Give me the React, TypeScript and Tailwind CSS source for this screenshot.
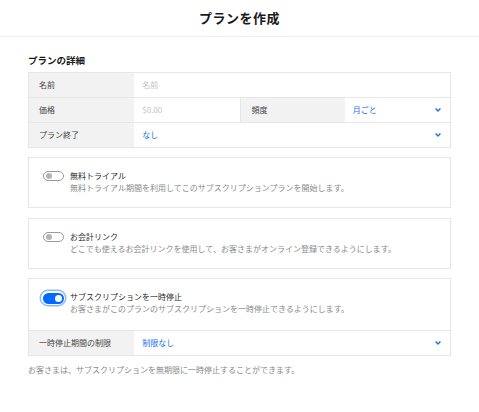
import React from "react";

const font = { fontFamily: '"Noto Sans CJK JP", "Noto Sans", sans-serif' };

function Chevron() {
  return (
    <svg width="6" height="4" viewBox="0 0 6 4" className="shrink-0">
      <path d="M0.6 0.6 L3 3 L5.4 0.6" fill="none" stroke="#1a6ef5" strokeWidth="1.4" />
    </svg>
  );
}

function Toggle({ on }: { on?: boolean }) {
  if (on) {
    return (
      <div className="rounded-full p-[1.5px] ring-[1.5px] ring-[#8db8ff] shrink-0">
        <div className="w-[21px] h-[11px] rounded-full bg-[#006aff] flex items-center justify-end pr-[2px]">
          <div className="w-[7px] h-[7px] rounded-full bg-white" />
        </div>
      </div>
    );
  }
  return (
    <div className="w-[21px] h-[10px] rounded-full border border-[#9a9a9a] bg-white flex items-center pl-[2px] shrink-0 mx-[1.5px]">
      <div className="w-[6px] h-[6px] rounded-full bg-[#b5b5b5]" />
    </div>
  );
}

function ToggleBlock({ title, desc, on }: { title: string; desc: string; on?: boolean }) {
  return (
    <div className="h-[49px] pl-[12px] flex items-start pt-[12px] gap-[5px]">
      <div className={on ? "pt-[0px]" : "pt-[1px]"}>
        <Toggle on={on} />
      </div>
      <div className="flex flex-col">
        <span className="text-[8px] leading-[12px] text-[#2b2b2b]">{title}</span>
        <span className="text-[8px] leading-[12px] text-[#8a8a8a]">{desc}</span>
      </div>
    </div>
  );
}

export default function App() {
  return (
    <div className="w-[479px] h-[412px] bg-white overflow-hidden" style={font}>
      <div className="h-[37px] border-b border-[#f0f0f0] flex items-center justify-center">
        <h1 className="text-[13px] font-bold text-[#1a1a1a] tracking-[0.5px]">プランを作成</h1>
      </div>

      <div className="px-[28px]">
        <h2 className="mt-[16px] text-[9.5px] font-bold text-[#1a1a1a] leading-[14px]">プランの詳細</h2>

        <div className="mt-[5px] border border-[#e6e6e6] grid grid-cols-4 text-[8px]">
          <div className="h-[24px] bg-[#f2f2f2] flex items-center pl-[10px] text-[#444]">名前</div>
          <div className="col-span-3 flex items-center pl-[8px] text-[#c2c2c2]">名前</div>

          <div className="h-[25px] bg-[#f2f2f2] flex items-center pl-[10px] text-[#444] border-t border-[#e6e6e6]">価格</div>
          <div className="flex items-center pl-[8px] text-[#c2c2c2] border-t border-[#e6e6e6]">$0.00</div>
          <div className="bg-[#f2f2f2] flex items-center pl-[11px] text-[#444] border-t border-l border-[#e6e6e6]">頻度</div>
          <div className="flex items-center justify-between pl-[8px] pr-[9px] text-[#1a6ef5] border-t border-[#e6e6e6]">
            <span>月ごと</span>
            <Chevron />
          </div>

          <div className="h-[25px] bg-[#f2f2f2] flex items-center pl-[10px] text-[#444] border-t border-[#e6e6e6]">プラン終了</div>
          <div className="col-span-3 flex items-center justify-between pl-[8px] pr-[9px] text-[#1a6ef5] border-t border-[#e6e6e6]">
            <span>なし</span>
            <Chevron />
          </div>
        </div>

        <div className="mt-[9px] border border-[#e6e6e6]">
          <ToggleBlock title="無料トライアル" desc="無料トライアル期間を利用してこのサブスクリプションプランを開始します。" />
        </div>

        <div className="mt-[10px] border border-[#e6e6e6]">
          <ToggleBlock title="お会計リンク" desc="どこでも使えるお会計リンクを使用して、お客さまがオンライン登録できるようにします。" />
        </div>

        <div className="mt-[9px] border border-[#e6e6e6]">
          <div className="h-[51px] pl-[12px] flex items-start pt-[12px] gap-[5px]">
            <Toggle on />
            <div className="flex flex-col">
              <span className="text-[8px] leading-[12px] text-[#2b2b2b]">サブスクリプションを一時停止</span>
              <span className="text-[8px] leading-[12px] text-[#8a8a8a]">お客さまがこのプランのサブスクリプションを一時停止できるようにします。</span>
            </div>
          </div>
          <div className="grid grid-cols-4 border-t border-[#e6e6e6] text-[8px]">
            <div className="h-[24px] bg-[#f2f2f2] flex items-center pl-[10px] text-[#444]">一時停止期間の制限</div>
            <div className="col-span-3 flex items-center justify-between pl-[8px] pr-[9px] text-[#1a6ef5]">
              <span>制限なし</span>
              <Chevron />
            </div>
          </div>
        </div>

        <p className="mt-[8px] text-[8px] leading-[12px] text-[#8a8a8a]">
          お客さまは、サブスクリプションを無期限に一時停止することができます。
        </p>
      </div>
    </div>
  );
}
